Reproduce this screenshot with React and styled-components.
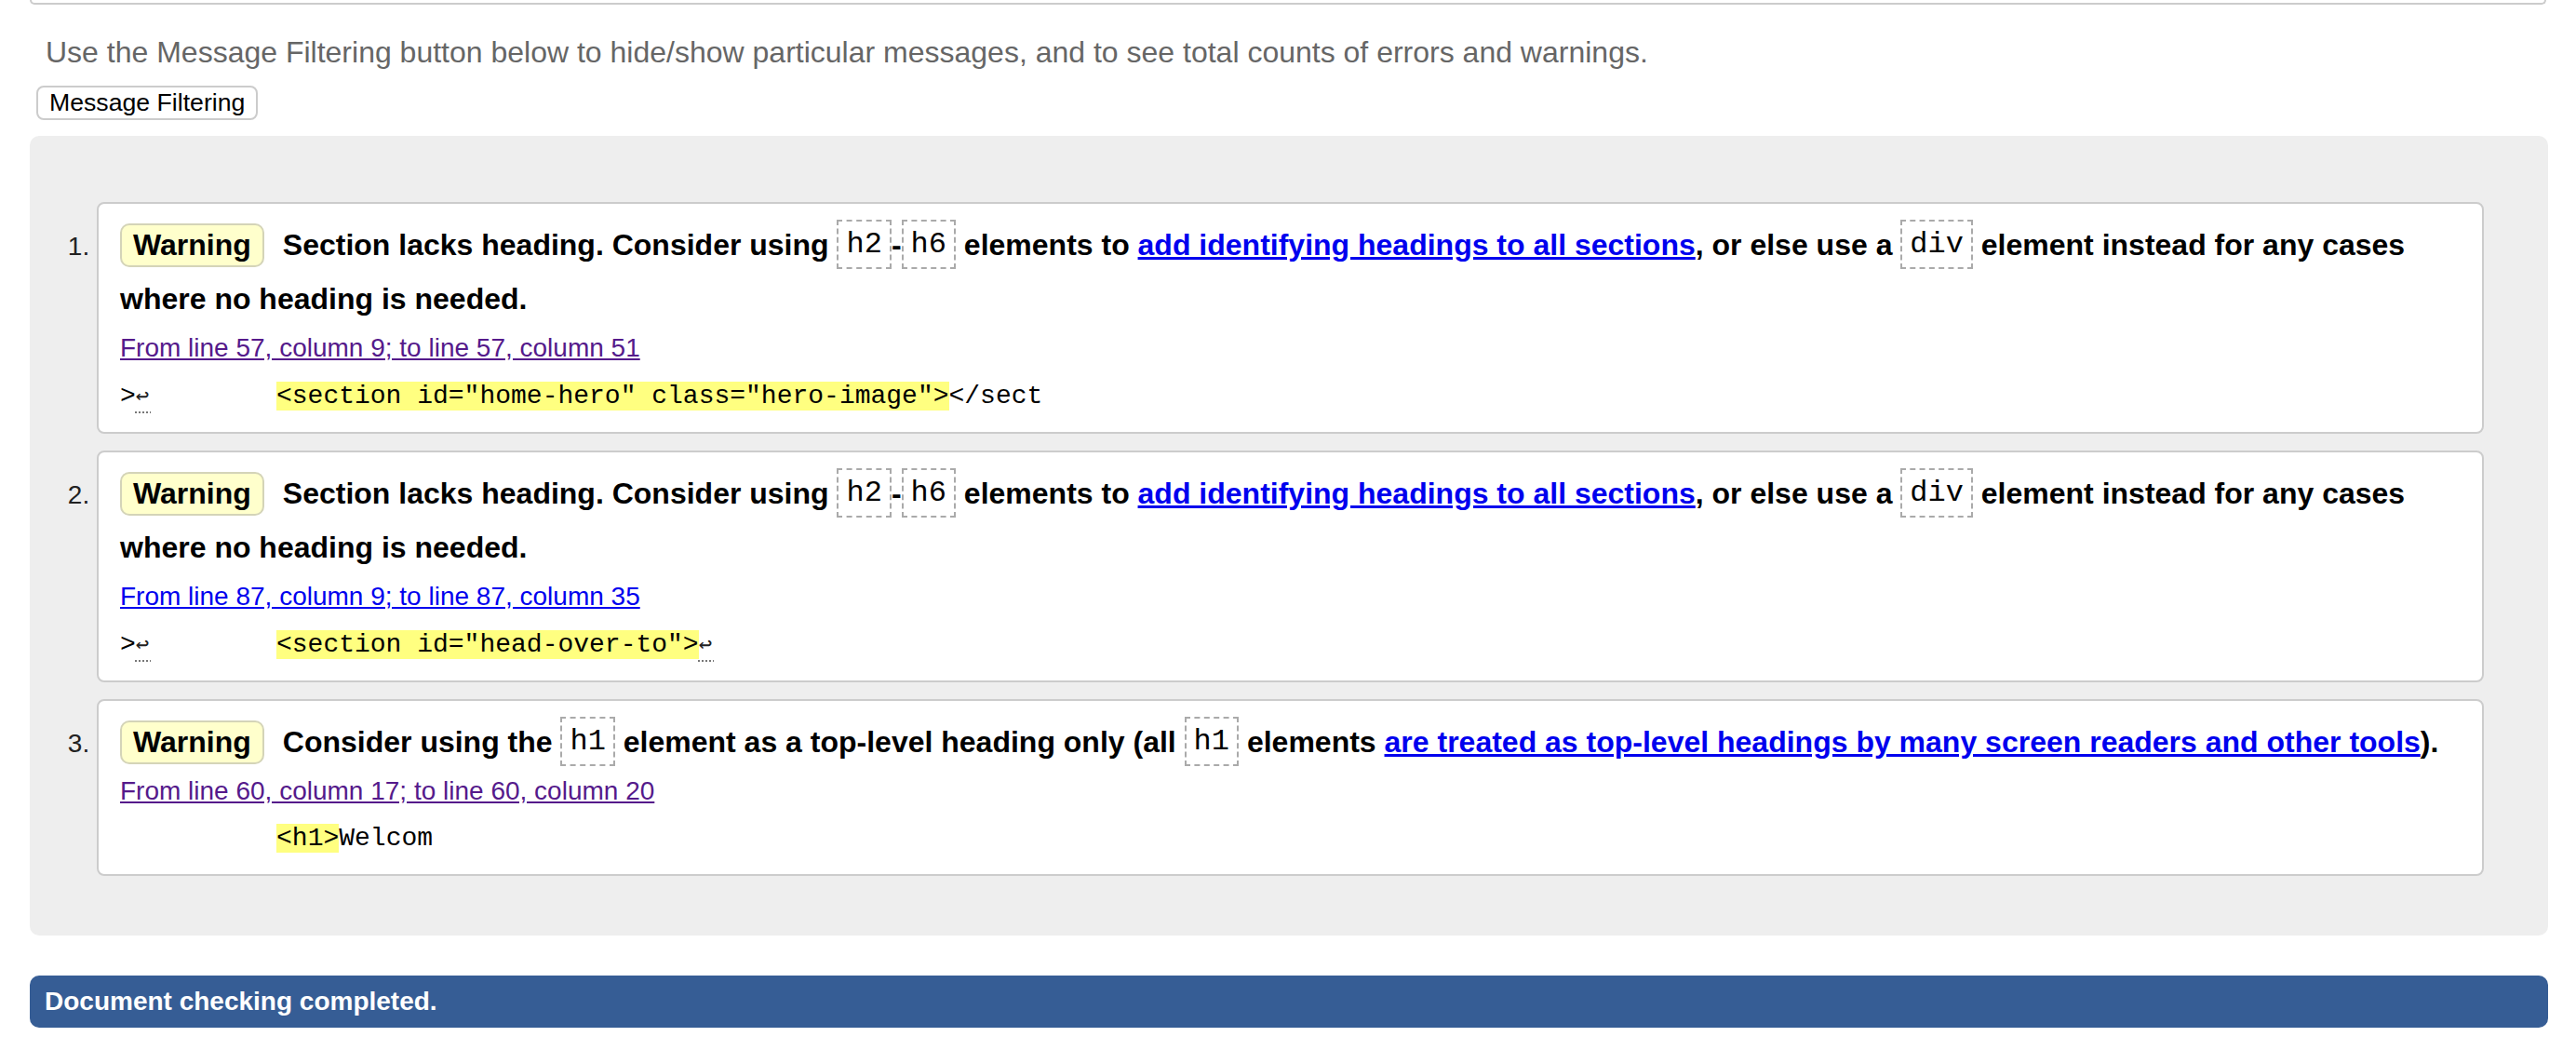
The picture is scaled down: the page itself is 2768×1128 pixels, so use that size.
import React from "react";
import styled, { createGlobalStyle } from "styled-components";

const GlobalStyle = createGlobalStyle`
  html, body {
    margin: 0;
    padding: 0;
    background: #fff;
  }
  body {
    font-family: "Liberation Sans", Arial, sans-serif;
    color: #000;
  }
`;

const Page = styled.div`
  padding: 0 30px 0 32px;
`;

const TopStub = styled.div`
  height: 3px;
  margin-right: 2px;
  border: 2px solid #ccc;
  border-top: none;
  border-radius: 0 0 8px 8px;
`;

const Intro = styled.p`
  margin: 33px 0 0 17px;
  font-size: 32px;
  line-height: 37px;
  color: #666;
`;

const FilterButton = styled.button`
  display: block;
  height: 37px;
  margin: 17px 0 0 7px;
  padding: 0 12px;
  font-family: "Liberation Sans", Arial, sans-serif;
  font-size: 26.67px;
  color: #000;
  background: #fff;
  border: 2px solid #ccc;
  border-radius: 8px;
`;

const Results = styled.ol`
  margin: 17px 0 0;
  padding: 71px 69px 64px 72px;
  background: #eee;
  border-radius: 10px;
  list-style: decimal outside;
`;

const Item = styled.li`
  & + & {
    margin-top: 18px;
  }
  &::marker {
    font-size: 28px;
    color: #222;
  }
`;

const Card = styled.div`
  padding: 15px 23px 22px;
  background: #fff;
  border: 2px solid #ccc;
  border-radius: 8px;
`;

const Message = styled.p`
  margin: 0;
  font-size: 32px;
  line-height: 58px;
  font-weight: bold;

  a {
    color: #0000ee;
  }
`;

const Badge = styled.strong`
  display: inline-block;
  margin-right: 20px;
  padding: 3px 12px;
  line-height: normal;
  background: #ffffcc;
  border: 2px solid #d4d4b8;
  border-radius: 10px;
`;

const Code = styled.code`
  padding: 6px 8px;
  font-family: "Liberation Mono", "Courier New", monospace;
  font-size: 32px;
  font-weight: normal;
  vertical-align: 3px;
  border: 2px dashed #aaa;
`;

const Location = styled.p`
  margin: 0;
  font-size: 28px;
  line-height: 47px;

  a {
    color: ${(p) => (p.$visited ? "#551a8b" : "#0000ee")};
  }
`;

const Extract = styled.p`
  margin: 12px 0 0;
  font-family: "Liberation Mono", "Courier New", monospace;
  font-size: 28px;
  line-height: 32px;
  white-space: pre;
`;

const Mark = styled.mark`
  background: #ffff80;
  color: inherit;
`;

const Lf = styled.span`
  font-family: "DejaVu Sans Mono", monospace;
  font-size: 24px;
  letter-spacing: 2.3px;
  color: #222;
  text-decoration: underline dotted #777;
  text-decoration-thickness: 2px;
  text-underline-offset: 9px;
`;

const Completed = styled.div`
  display: flex;
  align-items: center;
  height: 56px;
  margin-top: 43px;
  padding-left: 16px;
  font-size: 28px;
  font-weight: bold;
  color: #fff;
  background: #365d95;
  border-radius: 10px;
`;

const SectionMessage = () => (
  <Message>
    <Badge>Warning</Badge>Section lacks heading. Consider using <Code>h2</Code>-
    <Code>h6</Code> elements to{" "}
    <a href="#sections">add identifying headings to all sections</a>, or else
    use a <Code>div</Code> element instead for any cases where no heading is
    needed.
  </Message>
);

export default function App() {
  return (
    <>
      <GlobalStyle />
      <Page>
        <TopStub />
        <Intro>
          Use the Message Filtering button below to hide/show particular
          messages, and to see total counts of errors and warnings.
        </Intro>
        <FilterButton>Message Filtering</FilterButton>
        <Results>
          <Item>
            <Card>
              <SectionMessage />
              <Location $visited>
                <a href="#l57">From line 57, column 9; to line 57, column 51</a>
              </Location>
              <Extract>
                {">"}
                <Lf>↩</Lf>
                {"        "}
                <Mark>{'<section id="home-hero" class="hero-image">'}</Mark>
                {"</sect"}
              </Extract>
            </Card>
          </Item>
          <Item>
            <Card>
              <SectionMessage />
              <Location>
                <a href="#l87">From line 87, column 9; to line 87, column 35</a>
              </Location>
              <Extract>
                {">"}
                <Lf>↩</Lf>
                {"        "}
                <Mark>{'<section id="head-over-to">'}</Mark>
                <Lf>↩</Lf>
              </Extract>
            </Card>
          </Item>
          <Item>
            <Card>
              <Message>
                <Badge>Warning</Badge>Consider using the <Code>h1</Code>{" "}
                element as a top-level heading only (all <Code>h1</Code>{" "}
                elements{" "}
                <a href="#h1">
                  are treated as top-level headings by many screen readers and
                  other tools
                </a>
                ).
              </Message>
              <Location $visited>
                <a href="#l60">From line 60, column 17; to line 60, column 20</a>
              </Location>
              <Extract>
                {"          "}
                <Mark>{"<h1>"}</Mark>
                {"Welcom"}
              </Extract>
            </Card>
          </Item>
        </Results>
        <Completed>Document checking completed.</Completed>
      </Page>
    </>
  );
}
